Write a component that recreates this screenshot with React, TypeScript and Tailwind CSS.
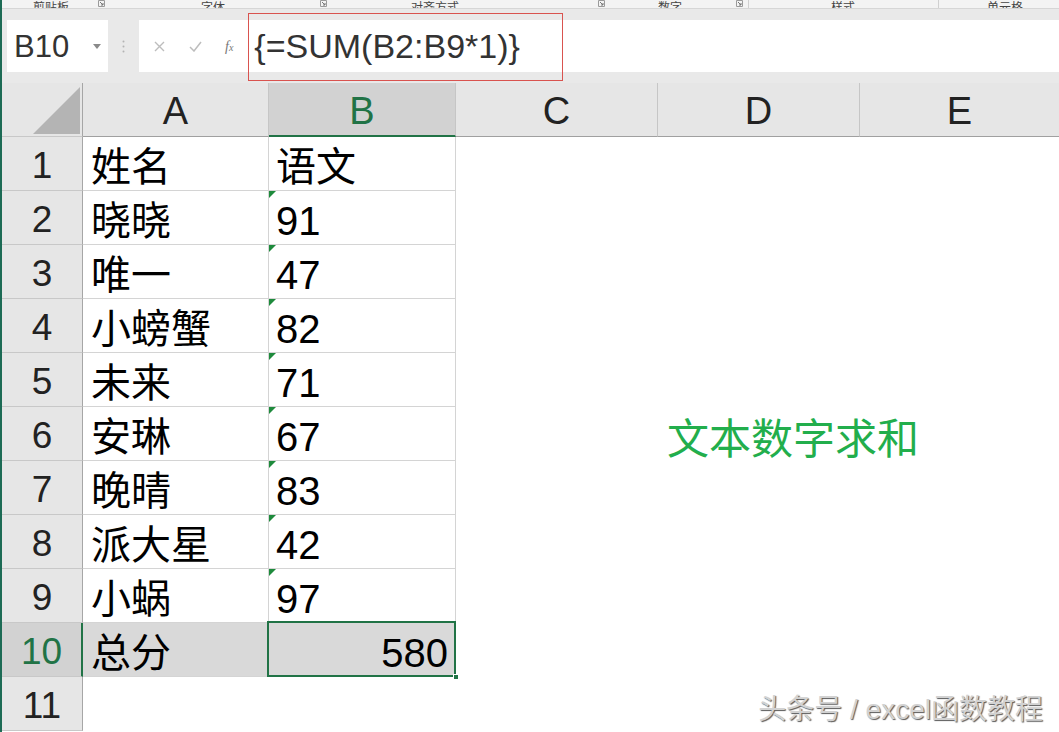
import React from 'react';

const font = "font-['Liberation_Sans','Noto_Sans_CJK_SC',sans-serif]";

const rows: [string, string][] = [
  ['姓名', '语文'],
  ['晓晓', '91'],
  ['唯一', '47'],
  ['小螃蟹', '82'],
  ['未来', '71'],
  ['安琳', '67'],
  ['晚晴', '83'],
  ['派大星', '42'],
  ['小蜗', '97'],
  ['总分', '580'],
  ['', ''],
];

function Launcher() {
  return (
    <svg width="7" height="7" viewBox="0 0 7 7" className="shrink-0">
      <path d="M0.5 0.5h6v6h-6z" fill="none" stroke="#9a9a9a" strokeWidth="1" />
      <path d="M2 2l3 3M5 3v2H3" fill="none" stroke="#777" strokeWidth="1" />
    </svg>
  );
}

function RibbonLabels() {
  return (
    <div className="flex h-[9px] overflow-hidden border-b border-[#d6d6d6] bg-[#f3f3f3] text-[12px] text-[#444]">
      <div className="flex w-[110px] shrink-0 items-end">
        <span className="ml-[31px] mb-[-6px] leading-[12px]">剪贴板</span>
        <div className="ml-auto mr-[7px] mb-[1px]"><Launcher /></div>
      </div>
      <div className="flex w-[220px] shrink-0 items-end">
        <span className="ml-[89px] mb-[-6px] leading-[12px]">字体</span>
        <div className="ml-auto mr-[5px] mb-[1px]"><Launcher /></div>
      </div>
      <div className="flex w-[277px] shrink-0 items-end">
        <span className="ml-[79px] mb-[-6px] leading-[12px]">对齐方式</span>
        <div className="ml-auto mr-[4px] mb-[1px]"><Launcher /></div>
      </div>
      <div className="flex w-[140px] shrink-0 items-end border-r border-[#d0d0d0]">
        <span className="ml-[49px] mb-[-6px] leading-[12px]">数字</span>
        <div className="ml-auto mr-[5px] mb-[1px]"><Launcher /></div>
      </div>
      <div className="flex w-[190px] shrink-0 items-end border-r border-[#d0d0d0]">
        <span className="ml-[82px] mb-[-6px] leading-[12px]">样式</span>
      </div>
      <div className="flex flex-1 items-end">
        <span className="ml-[48px] mb-[-6px] leading-[12px]">单元格</span>
      </div>
    </div>
  );
}

function FormulaBar() {
  return (
    <div className="relative flex h-[74px] items-start bg-[#e9e9e9] pt-[11px]">
      <div className="ml-[5px] flex h-[52px] w-[101px] items-center bg-white">
        <span className="ml-[7px] text-[31px] leading-none text-[#333]">B10</span>
        <svg width="8" height="5" viewBox="0 0 8 5" className="ml-auto mr-[7px]">
          <path d="M0 0h8L4 5z" fill="#8a8a8a" />
        </svg>
      </div>
      <div className="flex h-[52px] w-[31px] items-center justify-center">
        <svg width="3" height="13" viewBox="0 0 3 13">
          <circle cx="1.5" cy="1.5" r="1" fill="#b3b3b3" />
          <circle cx="1.5" cy="6.5" r="1" fill="#b3b3b3" />
          <circle cx="1.5" cy="11.5" r="1" fill="#b3b3b3" />
        </svg>
      </div>
      <div className="flex h-[52px] flex-1 items-center bg-white">
        <svg width="11" height="11" viewBox="0 0 11 11" className="ml-[15px]">
          <path d="M1 1l9 9M10 1l-9 9" stroke="#bdbdbd" strokeWidth="1.4" />
        </svg>
        <svg width="13" height="11" viewBox="0 0 13 11" className="ml-[24px]">
          <path d="M1 6l4 4 7-9" fill="none" stroke="#bdbdbd" strokeWidth="1.5" />
        </svg>
        <span className="ml-[23px] font-['Liberation_Serif',serif] text-[14px] italic text-[#777]">
          f<span className="text-[10px]">x</span>
        </span>
        <div className="ml-[15px] h-[52px] w-px bg-[#d6d6d6]" />
        <span className="ml-[5px] text-[34px] leading-none text-[#333]">{'{=SUM(B2:B9*1)}'}</span>
      </div>
      <div className="pointer-events-none absolute left-[246px] top-[4px] h-[68px] w-[315px] border border-[#d9534f]" />
    </div>
  );
}

function ColumnHeader() {
  const cell = 'flex h-[54px] shrink-0 items-center justify-center border-b border-r border-b-[#a0a0a0] border-r-[#c6c6c6] bg-[#e6e6e6] pt-[4px] text-[38px] text-[#222]';
  return (
    <div className="flex">
      <div className="flex h-[54px] w-[81px] shrink-0 items-end justify-end border-b border-r border-b-[#c8c8c8] border-r-[#a6a6a6] bg-[#e6e6e6] pb-[2px] pr-[2px]">
        <svg width="47" height="47" viewBox="0 0 47 47">
          <path d="M0 47L47 0v47z" fill="#b4b4b4" />
        </svg>
      </div>
      <div className={`${cell} w-[186px]`}>A</div>
      <div className="flex h-[54px] w-[187px] shrink-0 items-center justify-center border-b-2 border-r border-b-[#217346] border-r-[#c6c6c6] bg-[#d2d2d2] pt-[5px] text-[38px] text-[#217346]">
        B
      </div>
      <div className={`${cell} w-[202px]`}>C</div>
      <div className={`${cell} w-[202px]`}>D</div>
      <div className={`${cell} flex-1 border-r-0`}>E</div>
    </div>
  );
}

export default function App() {
  return (
    <div className={`relative h-[732px] w-[1059px] overflow-hidden border-l-2 border-[#1d6b55] bg-white ${font}`}>
      <RibbonLabels />
      <FormulaBar />
      <ColumnHeader />

      {rows.map(([name, score], i) => {
        const n = i + 1;
        const selected = n === 10;
        const last = n === 11;
        return (
          <div key={n} className="flex h-[54px]">
            {/* row header */}
            <div
              className={
                selected
                  ? 'flex w-[81px] shrink-0 items-center justify-center border-b border-r-2 border-b-[#c8c8c8] border-r-[#217346] bg-[#d2d2d2] pt-[5px] text-[37px] text-[#217346]'
                  : 'flex w-[81px] shrink-0 items-center justify-center border-b border-r border-b-[#c8c8c8] border-r-[#a6a6a6] bg-[#e6e6e6] pt-[5px] text-[37px] text-[#222]'
              }
            >
              {n}
            </div>
            {/* A */}
            <div
              className={`flex w-[186px] shrink-0 items-center whitespace-nowrap pl-[8px] pt-[6px] text-[40px] text-black ${
                last ? '' : 'border-b border-r border-[#d4d4d4]'
              } ${selected ? 'bg-[#d9d9d9]' : ''}`}
            >
              {name}
            </div>
            {/* B */}
            <div
              className={`relative flex w-[187px] shrink-0 items-center whitespace-nowrap pl-[7px] pt-[6px] text-[40px] text-black ${
                last ? '' : 'border-b border-r border-[#d4d4d4]'
              } ${selected ? 'justify-end bg-[#d9d9d9] pr-[7px]' : ''}`}
            >
              {n >= 2 && n <= 9 && (
                <svg width="7" height="7" viewBox="0 0 7 7" className="absolute left-0 top-0">
                  <path d="M0 0h7L0 7z" fill="#1e8a3c" />
                </svg>
              )}
              {score}
              {selected && (
                <>
                  <div className="pointer-events-none absolute -left-[2px] -top-[2px] h-[56px] w-[189px] border-2 border-[#217346]" />
                  <div className="absolute -bottom-[4px] -right-[4px] h-[6px] w-[6px] border border-white bg-[#217346]" />
                </>
              )}
            </div>
            {/* C */}
            <div className="w-[202px] shrink-0" />
            {/* D */}
            <div className="flex w-[202px] shrink-0 items-center overflow-visible whitespace-nowrap pl-[9px] pt-[10px] text-[42px] text-[#22ae4c]">
              {n === 6 ? '文本数字求和' : ''}
            </div>
            <div className="flex-1" />
          </div>
        );
      })}

      <div className="absolute bottom-[8px] right-[16px] whitespace-nowrap text-[28px] leading-none text-[#d2d2d2] [text-shadow:1px_1px_1px_#5a5a5a]">
        头条号 / excel函数教程
      </div>
    </div>
  );
}
